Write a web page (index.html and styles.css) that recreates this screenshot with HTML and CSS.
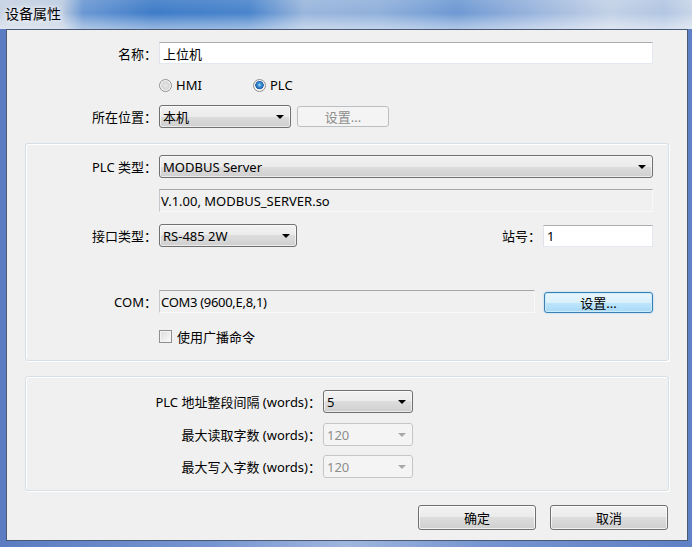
FILE: index.html
```html
<!DOCTYPE html>
<html lang="zh-CN">
<head>
    <meta charset="UTF-8">
    <title>设备属性</title>
    <link rel="stylesheet" href="styles.css">
</head>
<body>
<div class="window">
  <div class="titlebar"><span class="title">设备属性</span></div>
  <div class="client">
    <div class="row row-name">
      <span class="lbl">名称：</span>
      <div class="textbox w494">上位机</div>
    </div>
    <div class="row row-radio">
      <span class="lbl"></span>
      <span class="radio"></span><span class="rtext hmi">HMI</span>
      <span class="radio checked"></span><span class="rtext">PLC</span>
    </div>
    <div class="row row-loc">
      <span class="lbl">所在位置：</span>
      <div class="combo w132">本机<span class="arrow"></span></div>
      <div class="btn disabled small">设置...</div>
    </div>

    <div class="group g1">
      <div class="row r-plc">
        <span class="lbl">PLC 类型：</span>
        <div class="combo w494">MODBUS Server<span class="arrow"></span></div>
      </div>
      <div class="row r-ver">
        <span class="lbl"></span>
        <div class="readonly w494">V.1.00, MODBUS_SERVER.so</div>
      </div>
      <div class="row r-iface">
        <span class="lbl">接口类型：</span>
        <div class="combo w138">RS-485 2W<span class="arrow"></span></div>
        <span class="lbl-inline">站号：</span>
        <div class="textbox w110">1</div>
      </div>
      <div class="row r-com">
        <span class="lbl">COM：</span>
        <div class="readonly w376 narrow">COM3 (9600,E,8,1)</div>
        <div class="btn focused">设置...</div>
      </div>
      <div class="row r-chk">
        <span class="lbl"></span>
        <span class="check"></span><span class="ctext">使用广播命令</span>
      </div>
    </div>

    <div class="group g2">
      <div class="row">
        <span class="lbl">PLC 地址整段间隔 (words)：</span>
        <div class="combo w90">5<span class="arrow"></span></div>
      </div>
      <div class="row gap10">
        <span class="lbl">最大读取字数 (words)：</span>
        <div class="combo w90 disabled">120<span class="arrow"></span></div>
      </div>
      <div class="row gap9">
        <span class="lbl">最大写入字数 (words)：</span>
        <div class="combo w90 disabled">120<span class="arrow"></span></div>
      </div>
    </div>

    <div class="actions">
      <div class="btn big">确定</div>
      <div class="btn big">取消</div>
    </div>
  </div>
</div>
</body>
</html>
```

FILE: styles.css
```css
* { margin: 0; padding: 0; box-sizing: border-box; }
body { width: 692px; height: 547px; overflow: hidden; font-family: "Noto Sans", "Noto Sans CJK SC", sans-serif; font-size: 13px; color: #000; }

.window {
    width: 692px;
    height: 547px;
    display: flex;
    flex-direction: column;
    background: linear-gradient(to right, #5b7cc2 0, #7594d0 30%, #9fb6de 50%, #7594d0 70%, #5f80c5 100%);
}
.titlebar {
    height: 29px;
    padding: 5px 0 0 5px;
    background:
        linear-gradient(to bottom, rgba(255,255,255,0.1) 0, rgba(255,255,255,0) 45%, rgba(255,255,255,0.3) 80%, rgba(255,255,255,0.45) 100%),
        linear-gradient(to right, #c6d2e3 0, #bccbe1 9%, #6b98d3 12%, #3f7cc8 22%, #4a85cc 36%, #9ab6dc 44%, #8fb0db 55%, #6e99d3 66%, #9db7de 78%, #c2d1e6 88%, #b2c6e2 96%, #c8d5e8 100%);
}
.title { font-size: 14px; line-height: 17px; text-shadow: 0 0 5px #fff, 0 0 9px #fff; }

.client {
    margin-left: 6px;
    width: 682px;
    height: 512px;
    border: 1px solid #4a5a74;
    background: #f0f0f0;
    padding: 12px 19px 0 0;
}

.row { display: flex; align-items: flex-start; height: 23px; }
.lbl { width: 150px; height: 23px; display: flex; align-items: center; justify-content: flex-end; margin-right: 2px; white-space: nowrap; }
.row-name { height: 22px; }
.row-name .lbl { height: 22px; }
.row-radio { margin-top: 14px; height: 14px; align-items: center; }
.row-radio .lbl { height: 14px; }
.row-loc { margin-top: 13px; }

/* controls */
.textbox {
    height: 22px;
    background: #fff;
    border: 1px solid #e3e9ef;
    border-top-color: #abadb3;
    border-left-color: #e2e3ea;
    padding-left: 3px;
    display: flex;
    align-items: center;
}
.readonly {
    height: 23px;
    border: 1px solid #f9f9f9;
    border-top-color: #a5a7ad;
    border-left-color: #c5c7cc;
    padding-left: 1px;
    display: flex;
    align-items: center;
}
.narrow { letter-spacing: -0.3px; }
.combo {
    position: relative;
    height: 23px;
    border: 1px solid #707070;
    border-radius: 3px;
    background: linear-gradient(#f2f2f2 0, #ebebeb 50%, #dddddd 50%, #cfcfcf 100%);
    box-shadow: inset 0 0 0 1px rgba(255,255,255,0.6);
    padding-left: 3px;
    display: flex;
    align-items: center;
}
.combo .arrow {
    position: absolute;
    right: 6px;
    top: 9px;
    border-left: 4px solid transparent;
    border-right: 4px solid transparent;
    border-top: 4px solid #000;
}
.combo.disabled { border-color: #c3c6c8; background: #f4f4f4; box-shadow: none; color: #8d8d8d; }
.combo.disabled .arrow { border-top-color: #a8a8a8; }

.w494 { width: 494px; }
.w376 { width: 376px; }
.w138 { width: 138px; }
.w132 { width: 132px; }
.w110 { width: 110px; }
.w90 { width: 90px; }

.btn {
    height: 25px;
    border: 1px solid #707070;
    border-radius: 3px;
    background: linear-gradient(#f2f2f2 0, #ebebeb 50%, #dddddd 50%, #cfcfcf 100%);
    box-shadow: inset 0 0 0 1px rgba(255,255,255,0.7);
    display: flex;
    align-items: center;
    justify-content: center;
}
.btn.small { width: 92px; height: 21px; margin-left: 6px; margin-top: 1px; }
.btn.disabled { border-color: #bcbfc2; background: #f4f4f4; box-shadow: none; color: #8d8d8d; }
.btn.focused {
    width: 109px;
    height: 21px;
    margin-left: auto;
    margin-top: 2px;
    border-color: #3c7fb1;
    background: linear-gradient(#eaf6fd 0, #d9f0fc 50%, #bee6fd 50%, #a7d9f5 100%);
    box-shadow: inset 0 0 0 1px #c9ebfc, 0 0 2px #8fcdf5;
}
.btn.big { width: 118px; }

.radio {
    width: 13px;
    height: 13px;
    border-radius: 50%;
    border: 1px solid #929292;
    background: radial-gradient(circle at 50% 50%, #e9e9e9 0, #d6d6d6 45%, #f4f4f4 100%);
    box-shadow: inset 0 0 0 1px #f6f6f6;
}
.radio.checked {
    background: radial-gradient(circle at 50% 45%, #9fdcf9 0, #3c8ed2 2px, #1b5ea6 4px, #e6e6e6 4.5px, #f4f4f4 100%);
}
.rtext { margin-left: 4px; }
.rtext.hmi { width: 77px; }

.group {
    margin-left: 18px;
    width: 644px;
    border: 1px solid #d5dfe5;
    border-radius: 3px;
    box-shadow: inset 1px 1px 0 #fff, 1px 1px 0 #fff;
    padding: 11px 15px 0 0;
}
.g1 { margin-top: 15px; height: 218px; }
.g1 .lbl { width: 131px; }
.r-ver { margin-top: 11px; }
.r-iface { margin-top: 12px; }
.lbl-inline { margin-left: auto; height: 23px; display: flex; align-items: center; margin-right: 2px; }
.r-iface .textbox { margin-top: 1px; }
.r-com { margin-top: 43px; }
.r-chk { margin-top: 17px; height: 13px; align-items: center; }
.r-chk .lbl { height: 13px; }
.check {
    width: 13px;
    height: 13px;
    border: 1px solid #8e8f8f;
    background: linear-gradient(135deg, #dcdcdc 0, #f2f2f2 70%, #fbfbfb 100%);
    box-shadow: inset 0 0 0 1px #f4f4f4;
}
.ctext { margin-left: 5px; }

.g2 { margin-top: 15px; height: 115px; padding-top: 13px; }
.g2 .lbl { width: 295px; }
.gap10 { margin-top: 10px; }
.gap9 { margin-top: 9px; }

.actions { display: flex; justify-content: flex-end; gap: 14px; margin-top: 14px; }
```
